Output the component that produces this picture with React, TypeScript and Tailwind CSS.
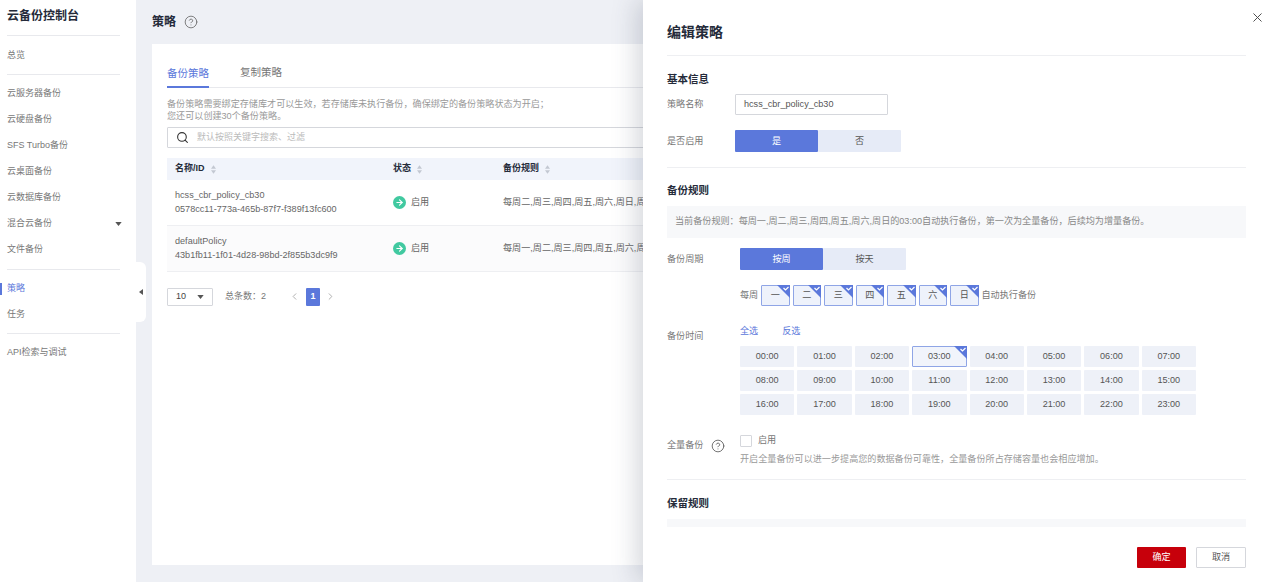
import React from 'react';
import { CircleHelp, ArrowRight, Search, X, ChevronLeft, ChevronRight } from 'lucide-react';

const navTop = ['云服务器备份', '云硬盘备份', 'SFS Turbo备份', '云桌面备份', '云数据库备份', '混合云备份', '文件备份'];
const days = ['一', '二', '三', '四', '五', '六', '日'];
const hours = Array.from({ length: 24 }, (_, i) => `${String(i).padStart(2, '0')}:00`);

function Caret({ className = '' }: { className?: string }) {
  return (
    <svg viewBox="0 0 8 5" className={`w-[7px] h-[4px] ${className}`}>
      <path d="M0 0h8L4 5z" fill="currentColor" />
    </svg>
  );
}

function Sort() {
  return (
    <svg viewBox="0 0 6 10" className="w-[5px] h-[9px] ml-[6px] text-[#c3c8d2]">
      <path d="M3 0l3 4H0zM3 10L0 6h6z" fill="currentColor" />
    </svg>
  );
}

function Corner({ size = 13 }: { size?: number }) {
  return (
    <svg viewBox="0 0 13 13" width={size} height={size} className="absolute -top-px -right-px">
      <path d="M0 0h13v13z" fill="#5b78db" />
      <path d="M6.5 3l2 2 3-3" fill="none" stroke="#fff" strokeWidth="1.2" />
    </svg>
  );
}

function Status() {
  return (
    <div className="flex items-center w-[110px] pt-[2px]">
      <span className="w-[13px] h-[13px] rounded-full bg-[#41c9a0] flex items-center justify-center">
        <ArrowRight size={9} color="#fff" strokeWidth={3} />
      </span>
      <span className="ml-[5px]">启用</span>
    </div>
  );
}

function Row({ name, id, rule, alt }: { name: string; id: string; rule: string; alt?: boolean }) {
  return (
    <div className={`h-[46px] flex items-center pl-[8px] pb-[2px] border-b border-[#eeeff2] text-[9.1px] text-[#666] ${alt ? 'bg-[#fbfbfc]' : ''}`}>
      <div className="w-[218px] leading-[14px]">
        <div>{name}</div>
        <div className="whitespace-nowrap">{id}</div>
      </div>
      <Status />
      <div className="whitespace-nowrap pt-[2px]">{rule}</div>
    </div>
  );
}

function Segmented({ a, b, w = 'w-[83px]' }: { a: string; b: string; w?: string }) {
  return (
    <div className="flex h-[22px] text-[9.1px]">
      <div className={`${w} bg-[#5b78db] text-white flex items-center justify-center pt-px rounded-[1px]`}>{a}</div>
      <div className={`${w} bg-[#e6ebf7] text-[#555] flex items-center justify-center pt-px rounded-[1px]`}>{b}</div>
    </div>
  );
}

function SectionTitle({ children, className = '' }: { children: React.ReactNode; className?: string }) {
  return <div className={`h-[24px] flex items-center text-[10.5px] font-bold text-[#252b3a] ${className}`}>{children}</div>;
}

export default function App() {
  return (
    <div className="relative w-[1267px] h-[582px] overflow-hidden flex bg-[#eef0f5] text-[#777] font-['Liberation_Sans','Noto_Sans_CJK_SC',sans-serif]">
      {/* sidebar */}
      <aside className="w-[136px] shrink-0 bg-white pl-[7px] pr-[16px] text-[9px] relative">
        <div className="h-[36px] pt-[7px] text-[12px] font-bold text-[#252b3a] border-b border-[#e8e9ed]">云备份控制台</div>
        <div className="h-[39px] flex items-center pt-[2px] border-b border-[#e8e9ed]">总览</div>
        <div className="pt-[6px] pb-[6px] border-b border-[#e8e9ed]">
          {navTop.map((n) => (
            <div key={n} className="h-[26px] flex items-center justify-between">
              {n}
              {n === '混合云备份' && <Caret className="text-[#555] mr-[-2px]" />}
            </div>
          ))}
        </div>
        <div className="pt-[6px] pb-[5px] border-b border-[#e8e9ed]">
          <div className="h-[26px] flex items-center text-[#5b78db] relative">
            <span className="absolute -left-[7px] top-[7px] w-[2px] h-[12px] bg-[#5b78db]" />
            策略
          </div>
          <div className="h-[26px] flex items-center">任务</div>
        </div>
        <div className="h-[38px] flex items-center">API检索与调试</div>
        <div className="absolute left-[136px] top-[262px] w-[10px] h-[60px] bg-white rounded-r-[6px] flex items-center justify-center">
          <svg viewBox="0 0 4 6" className="w-[4px] h-[6px]"><path d="M4 0v6L0 3z" fill="#555" /></svg>
        </div>
      </aside>

      {/* main */}
      <main className="flex-1 min-w-0 px-[16px]">
        <div className="h-[44px] flex items-center text-[12px] font-bold text-[#252b3a]">
          策略
          <CircleHelp size={14} className="ml-[8px] text-[#666]" strokeWidth={1.4} />
        </div>
        <div className="h-[521px] bg-white pl-[15px] pr-[15px] overflow-hidden">
          <div className="h-[44px] flex items-end border-b border-[#e8e9ed] text-[10.5px]">
            <div className="h-[22px] w-[42px] whitespace-nowrap text-[#5b78db] border-b-2 border-[#5b78db] -mb-px">备份策略</div>
            <div className="h-[22px] ml-[31px] whitespace-nowrap">复制策略</div>
          </div>
          <div className="mt-[10px] text-[9.1px] leading-[12px] text-[#999]">
            <div>备份策略需要绑定存储库才可以生效，若存储库未执行备份，确保绑定的备份策略状态为开启；</div>
            <div>您还可以创建30个备份策略。</div>
          </div>
          <div className="mt-[5px] h-[21px] border border-[#d5d7dc] rounded-[1px] flex items-center pl-[8px] text-[9px] text-[#bbb]">
            <Search size={13} className="text-[#333]" strokeWidth={2} />
            <span className="ml-[8px]">默认按照关键字搜索、过滤</span>
          </div>
          <div className="mt-[10px] h-[22px] bg-[#f1f4fb] flex items-center pl-[8px] text-[9px] font-bold text-[#252b3a]">
            <div className="w-[218px] flex items-center">名称/ID<Sort /></div>
            <div className="w-[110px] flex items-center">状态<Sort /></div>
            <div className="flex items-center">备份规则<Sort /></div>
          </div>
          <Row name="hcss_cbr_policy_cb30" id="0578cc11-773a-465b-87f7-f389f13fc600" rule="每周二,周三,周四,周五,周六,周日,周一" />
          <Row name="defaultPolicy" id="43b1fb11-1f01-4d28-98bd-2f855b3dc9f9" rule="每周一,周二,周三,周四,周五,周六,周日" alt />
          <div className="mt-[15px] h-[18px] flex items-center text-[9px] pt-px">
            <div className="w-[46px] h-[18px] border border-[#d5d7dc] rounded-[1px] flex items-center justify-between px-[8px] text-[#444]">
              10
              <Caret className="text-[#555]" />
            </div>
            <span className="ml-[12px]">总条数：2</span>
            <ChevronLeft size={11} className="ml-[23px] text-[#aaa]" />
            <div className="ml-[6px] w-[14px] h-[18px] bg-[#5b78db] rounded-[1px] text-white font-bold flex items-center justify-center">1</div>
            <ChevronRight size={11} className="ml-[5px] text-[#aaa]" />
          </div>
        </div>
      </main>

      {/* drawer */}
      <div className="absolute right-0 top-0 w-[624px] h-full bg-white flex flex-col shadow-[-6px_0_24px_rgba(60,70,90,0.22)]">
        <X size={15} strokeWidth={1.5} className="absolute top-[10px] right-[2px] text-[#444]" />
        <div className="flex-1 min-h-0 overflow-hidden pl-[24px] pr-[21px]">
          <div className="h-[56px] pt-[9px] flex items-center border-b border-[#eeeff2] text-[14px] font-bold text-[#252b3a]">编辑策略</div>
          <SectionTitle className="mt-[12px]">基本信息</SectionTitle>
          <div className="mt-[2px] flex items-center text-[9.1px]">
            <div className="w-[68px] pt-px">策略名称</div>
            <div className="w-[153px] h-[21px] border border-[#d5d7dc] rounded-[1px] flex items-center pl-[8px] text-[#555]">hcss_cbr_policy_cb30</div>
          </div>
          <div className="mt-[15px] pb-[15px] flex items-center text-[9.1px] border-b border-[#eeeff2]">
            <div className="w-[68px] pt-px">是否启用</div>
            <Segmented a="是" b="否" />
          </div>
          <SectionTitle className="mt-[11px]">备份规则</SectionTitle>
          <div className="mt-[3px] h-[32px] bg-[#f7f8fa] flex items-center pl-[8px] text-[9.1px] text-[#888]">
            当前备份规则：每周一,周二,周三,周四,周五,周六,周日的03:00自动执行备份，第一次为全量备份，后续均为增量备份。
          </div>
          <div className="mt-[10px] flex items-center text-[9.1px]">
            <div className="w-[73px] pt-px">备份周期</div>
            <Segmented a="按周" b="按天" />
          </div>
          <div className="mt-[15px] ml-[73px] h-[21px] flex items-center text-[9.1px]">
            <span className="w-[21px]">每周</span>
            <div className="flex gap-[3px]">
              {days.map((d) => (
                <div key={d} className="relative w-[28.5px] h-[21px] bg-[#eef2fb] border border-[#8fa5e6] rounded-[1px] flex items-center justify-center text-[#555]">
                  {d}
                  <Corner />
                </div>
              ))}
            </div>
            <span className="ml-[3px]">自动执行备份</span>
          </div>
          <div className="mt-[18px] flex text-[9.1px]">
            <div className="w-[73px] pt-[6px]">备份时间</div>
            <div>
              <div className="h-[14px] flex items-center pt-px text-[#5b78db]">
                <span>全选</span>
                <span className="ml-[24px]">反选</span>
              </div>
              <div className="mt-[8px] grid grid-cols-8 gap-x-[3px] gap-y-[3px] w-[456px]">
                {hours.map((h) => (
                  <div key={h} className={`relative h-[21px] flex items-center justify-center text-[#555] rounded-[1px] ${h === '03:00' ? 'bg-[#f1f4fb] border border-[#8fa5e6]' : 'bg-[#eef1f8]'}`}>
                    {h}
                    {h === '03:00' && <Corner />}
                  </div>
                ))}
              </div>
            </div>
          </div>
          <div className="mt-[19px] pb-[14px] flex text-[9.1px] border-b border-[#eeeff2]">
            <div className="w-[73px] flex items-center h-[22px] pt-[2px]">
              全量备份
              <CircleHelp size={14} strokeWidth={1.4} className="ml-[8px] text-[#555]" />
            </div>
            <div>
              <div className="h-[13px] flex items-center">
                <span className="w-[12px] h-[12px] border border-[#d5d7dc] rounded-[1px]" />
                <span className="ml-[6px]">启用</span>
              </div>
              <div className="mt-[6px] leading-[12px] text-[#999]">开启全量备份可以进一步提高您的数据备份可靠性，全量备份所占存储容量也会相应增加。</div>
            </div>
          </div>
          <SectionTitle className="mt-[12px]">保留规则</SectionTitle>
          <div className="mt-[3px] h-[9px] bg-[#f7f8fa]" />
        </div>
        <div className="h-[55px] shrink-0 flex items-start justify-end gap-[10px] pr-[21px] pt-[20px] text-[9.1px]">
          <div className="w-[49px] h-[21px] bg-[#c7000b] text-white rounded-[1px] flex items-center justify-center">确定</div>
          <div className="w-[50px] h-[21px] border border-[#d5d7dc] text-[#555] rounded-[1px] flex items-center justify-center">取消</div>
        </div>
      </div>
    </div>
  );
}
